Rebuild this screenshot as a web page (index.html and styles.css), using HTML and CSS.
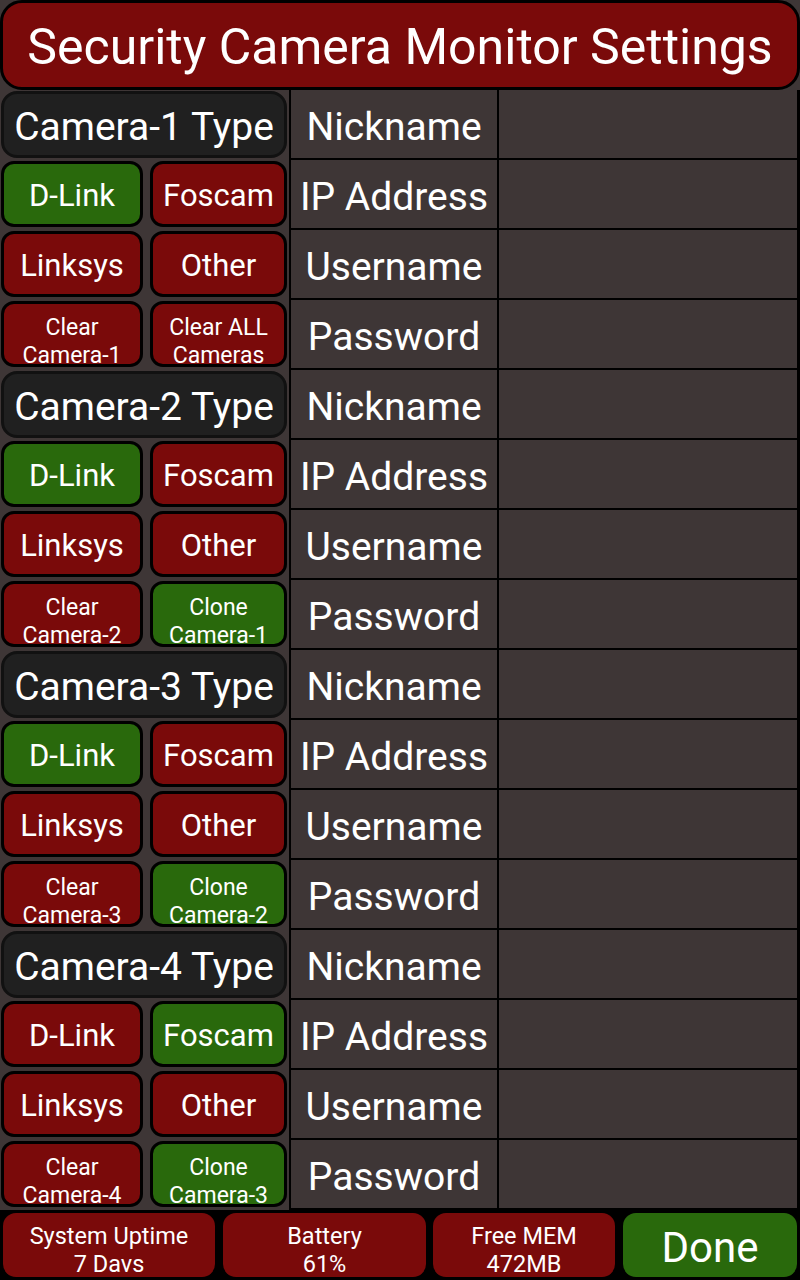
FILE: index.html
```html
<!DOCTYPE html>
<html>
<head>
<meta charset="utf-8">
<link rel="stylesheet" href="styles.css">
</head>
<body>
<div class="screen">
  <div class="title">Security Camera Monitor Settings</div>
  <div class="main">
    <div class="left">
      <div class="cam">
        <div class="head">Camera-1 Type</div>
        <div class="btn green">D-Link</div>
        <div class="btn red">Foscam</div>
        <div class="btn red">Linksys</div>
        <div class="btn red">Other</div>
        <div class="btn red small">Clear<br>Camera-1</div>
        <div class="btn red small">Clear ALL<br>Cameras</div>
      </div>
      <div class="cam">
        <div class="head">Camera-2 Type</div>
        <div class="btn green">D-Link</div>
        <div class="btn red">Foscam</div>
        <div class="btn red">Linksys</div>
        <div class="btn red">Other</div>
        <div class="btn red small">Clear<br>Camera-2</div>
        <div class="btn green small">Clone<br>Camera-1</div>
      </div>
      <div class="cam">
        <div class="head">Camera-3 Type</div>
        <div class="btn green">D-Link</div>
        <div class="btn red">Foscam</div>
        <div class="btn red">Linksys</div>
        <div class="btn red">Other</div>
        <div class="btn red small">Clear<br>Camera-3</div>
        <div class="btn green small">Clone<br>Camera-2</div>
      </div>
      <div class="cam">
        <div class="head">Camera-4 Type</div>
        <div class="btn red">D-Link</div>
        <div class="btn green">Foscam</div>
        <div class="btn red">Linksys</div>
        <div class="btn red">Other</div>
        <div class="btn red small">Clear<br>Camera-4</div>
        <div class="btn green small">Clone<br>Camera-3</div>
      </div>
    </div>
    <div class="fields">
      <div class="label">Nickname</div><div class="value"></div>
      <div class="label">IP Address</div><div class="value"></div>
      <div class="label">Username</div><div class="value"></div>
      <div class="label">Password</div><div class="value"></div>
      <div class="label">Nickname</div><div class="value"></div>
      <div class="label">IP Address</div><div class="value"></div>
      <div class="label">Username</div><div class="value"></div>
      <div class="label">Password</div><div class="value"></div>
      <div class="label">Nickname</div><div class="value"></div>
      <div class="label">IP Address</div><div class="value"></div>
      <div class="label">Username</div><div class="value"></div>
      <div class="label">Password</div><div class="value"></div>
      <div class="label">Nickname</div><div class="value"></div>
      <div class="label">IP Address</div><div class="value"></div>
      <div class="label">Username</div><div class="value"></div>
      <div class="label">Password</div><div class="value"></div>
    </div>
  </div>
  <div class="bottom">
    <div class="stat uptime">System Uptime<br>7 Davs</div>
    <div class="stat battery">Battery<br>61%</div>
    <div class="stat mem">Free MEM<br>472MB</div>
    <div class="done">Done</div>
  </div>
</div>
</body>
</html>
```

FILE: styles.css
```css
html, body {
  margin: 0;
  padding: 0;
  background: #3e3636;
}
body {
  font-family: Roboto, "Noto Sans", sans-serif;
  color: #fff;
}
.screen {
  width: 800px;
  height: 1280px;
  display: flex;
  flex-direction: column;
  background: #3e3636;
}
.title {
  height: 90px;
  box-sizing: border-box;
  border: 3px solid #000;
  border-radius: 22px;
  background: #7a0a0a;
  display: flex;
  align-items: center;
  justify-content: center;
  font-size: 50px;
  padding-top: 4px;
}
.main {
  display: grid;
  grid-template-columns: 289px 1fr;
  height: 1120px;
}
.left {
  display: flex;
  flex-direction: column;
}
.cam {
  display: grid;
  grid-template-columns: 142px 137px;
  column-gap: 7px;
  grid-template-rows: repeat(4, 70px);
  padding-left: 1px;
}
.head {
  grid-column: 1 / 3;
  margin: 1px 0 2px 0;
  box-sizing: border-box;
  border: 3px solid #111;
  border-radius: 16px;
  background: #202020;
  display: flex;
  align-items: center;
  justify-content: center;
  font-size: 39px;
  padding-top: 4px;
}
.btn {
  margin: 1px 0 3px 0;
  box-sizing: border-box;
  border: 3px solid #000;
  border-radius: 13px;
  display: flex;
  align-items: center;
  justify-content: center;
  text-align: center;
  font-size: 31px;
  padding-top: 2px;
}
.btn.small {
  font-size: 23px;
  line-height: 28px;
  padding-top: 15px;
}
.red { background: #7a0a0a; }
.green { background: #29690c; }
.fields {
  background: #000;
  display: grid;
  grid-template-columns: 206px 1fr;
  grid-auto-rows: 68px;
  gap: 2px;
  padding: 0 3px 2px 2px;
}
.label {
  background: #3e3636;
  display: flex;
  align-items: center;
  justify-content: center;
  font-size: 39px;
  padding-top: 6px;
}
.value {
  background: #3e3636;
}
.bottom {
  height: 70px;
  background: #000;
  display: flex;
  align-items: center;
  padding: 0 3px;
  box-sizing: border-box;
}
.stat, .done {
  height: 64px;
  border-radius: 13px;
  display: flex;
  align-items: center;
  justify-content: center;
  text-align: center;
}
.stat {
  background: #7a0a0a;
  font-size: 23.5px;
  line-height: 28px;
  padding-top: 10px;
  box-sizing: border-box;
}
.uptime { width: 212px; }
.battery { width: 203px; margin-left: 8px; }
.mem { width: 182px; margin-left: 7px; }
.done {
  width: 174px;
  margin-left: 8px;
  background: #29690c;
  font-size: 42px;
  padding-top: 4px;
  box-sizing: border-box;
}
```
